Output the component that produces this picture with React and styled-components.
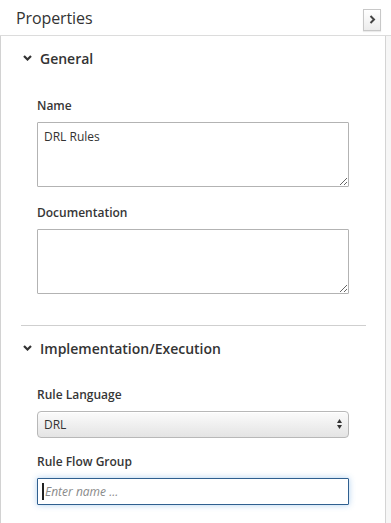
import React from 'react';
import styled, { createGlobalStyle } from 'styled-components';

const GlobalStyle = createGlobalStyle`
  html, body {
    margin: 0;
    padding: 0;
    background: #fff;
  }
  body {
    font-family: "Open Sans", "Liberation Sans", sans-serif;
    color: #363636;
    overflow: hidden;
  }
`;

const Panel = styled.div`
  width: 391px;
  height: 523px;
  display: flex;
  flex-direction: column;
  background: #fff;
`;

const Header = styled.div`
  height: 35px;
  flex: none;
  display: flex;
  align-items: center;
  justify-content: space-between;
  padding: 0 10px 0 16px;
  border-bottom: 1px solid #dcdcdc;
`;

const Title = styled.h1`
  margin: 0;
  font-size: 16px;
  font-weight: 400;
  color: #333;
  letter-spacing: -0.1px;
`;

const ToggleButton = styled.button`
  width: 18px;
  height: 22px;
  padding: 0;
  display: flex;
  align-items: center;
  justify-content: center;
  border: 1px solid #c8c8c8;
  background: linear-gradient(#ffffff, #ececec);
  box-shadow: 0 1px 1px rgba(0, 0, 0, 0.08);
  margin-top: 4px;
`;

const Body = styled.div`
  flex: 1;
  display: flex;
  border-left: 1px solid #d2d2d2;
  min-height: 0;
`;

const Content = styled.div`
  flex: 1;
  padding: 0 19px 0 20px;
  overflow: hidden;
`;

const Track = styled.div`
  width: 5px;
  flex: none;
  border-left: 1px solid #d4d4d4;
  background: #f6f6f6;
`;

const Section = styled.section`
  padding-bottom: ${(p) => p.$pad || 0}px;
  border-bottom: ${(p) => (p.$divider ? '1px solid #cfcfcf' : 'none')};
`;

const SectionTitle = styled.div`
  display: flex;
  align-items: center;
  gap: 8px;
  padding: 12px 0 0 2px;
  height: 20px;
  font-size: 14px;
  font-weight: 600;
  color: #333;
`;

const Fields = styled.div`
  padding: 0 17px 0 16px;
`;

const Label = styled.label`
  display: block;
  font-size: 12px;
  font-weight: 600;
  line-height: 17px;
  color: #363636;
  margin: ${(p) => p.$top}px 0 8px;
`;

const TextArea = styled.textarea`
  display: block;
  box-sizing: border-box;
  width: 100%;
  height: 65px;
  margin: 0;
  padding: 5px 6px;
  border: 1px solid #b3b3b3;
  border-radius: 1px;
  font-family: inherit;
  font-size: 12px;
  line-height: 17px;
  color: #333;
  resize: vertical;
  outline: none;
`;

const SelectWrap = styled.div`
  position: relative;
`;

const Select = styled.select`
  display: block;
  box-sizing: border-box;
  width: 100%;
  height: 27px;
  margin: 0;
  padding: 0 6px;
  appearance: none;
  border: 1px solid #b8b8b8;
  border-radius: 4px;
  background: linear-gradient(#fbfbfb, #e4e4e4);
  box-shadow: inset 0 1px 0 #fff;
  font-family: inherit;
  font-size: 12px;
  color: #333;
  outline: none;
`;

const Arrows = styled.svg`
  position: absolute;
  right: 7px;
  top: 7px;
  pointer-events: none;
`;

const InputWrap = styled.div`
  position: relative;
`;

const Input = styled.input`
  display: block;
  box-sizing: border-box;
  width: 100%;
  height: 27px;
  margin: 0;
  padding: 0 7px;
  border: 1px solid #2f5f8f;
  border-radius: 1px;
  box-shadow: 0 0 6px rgba(80, 150, 220, 0.45);
  font-family: inherit;
  font-size: 12px;
  color: #333;
  outline: none;
  &::placeholder {
    font-style: italic;
    color: #8a8a8a;
  }
`;

const Caret = styled.span`
  position: absolute;
  left: 5px;
  top: 5px;
  width: 2px;
  height: 17px;
  background: #222;
`;

const Chevron = () => (
  <svg width="9" height="6" viewBox="0 0 9 6">
    <path d="M1 1 L4.5 4.5 L8 1" fill="none" stroke="#333" strokeWidth="2.2" />
  </svg>
);

const App = () => {
  return (
    <Panel>
      <GlobalStyle />
      <Header>
        <Title>Properties</Title>
        <ToggleButton aria-label="collapse">
          <svg width="7" height="9" viewBox="0 0 7 9">
            <path d="M1.5 1 L5 4.5 L1.5 8" fill="none" stroke="#444" strokeWidth="2" />
          </svg>
        </ToggleButton>
      </Header>
      <Body>
        <Content>
          <Section $divider $pad={31}>
            <SectionTitle>
              <Chevron />
              General
            </SectionTitle>
            <Fields>
              <Label $top={29}>Name</Label>
              <TextArea defaultValue="DRL Rules" />
              <Label $top={17}>Documentation</Label>
              <TextArea defaultValue="" />
            </Fields>
          </Section>
          <Section>
            <SectionTitle>
              <Chevron />
              Implementation/Execution
            </SectionTitle>
            <Fields>
              <Label $top={28}>Rule Language</Label>
              <SelectWrap>
                <Select defaultValue="DRL">
                  <option>DRL</option>
                </Select>
                <Arrows width="5" height="12" viewBox="0 0 5 12">
                  <path d="M0 5 L2.5 1 L5 5 Z" fill="#333" />
                  <path d="M0 7 L2.5 11 L5 7 Z" fill="#333" />
                </Arrows>
              </SelectWrap>
              <Label $top={15}>Rule Flow Group</Label>
              <InputWrap>
                <Input placeholder="Enter name ..." />
                <Caret />
              </InputWrap>
            </Fields>
          </Section>
        </Content>
        <Track />
      </Body>
    </Panel>
  );
};

export default App;
